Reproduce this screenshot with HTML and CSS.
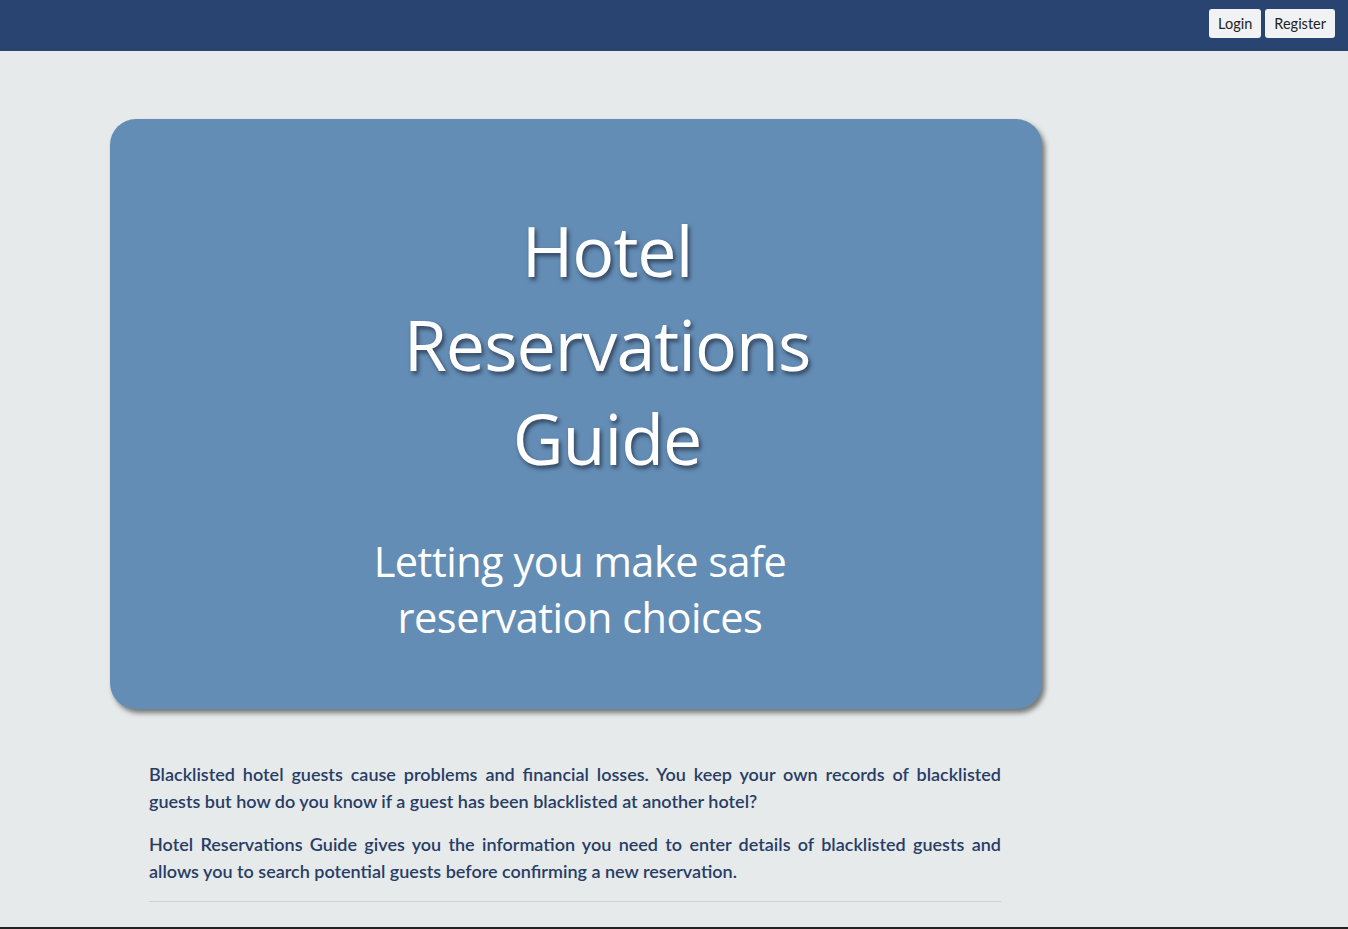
FILE: index.html
```html
<!DOCTYPE html>
<html lang="en">
<head>
<meta charset="utf-8">
<title>Hotel Reservations Guide</title>
<link rel="stylesheet" href="styles.css">
</head>
<body>
<header class="navbar">
  <div class="nav-actions">
    <a class="btn" href="#">Login</a>
    <a class="btn" href="#">Register</a>
  </div>
</header>
<main class="main">
  <section class="hero">
    <h1 class="hero-title">Hotel<br>Reservations<br>Guide</h1>
    <p class="hero-sub">Letting you make safe<br>reservation choices</p>
  </section>
  <section class="intro">
    <p>Blacklisted hotel guests cause problems and financial losses. You keep your own records of blacklisted guests but how do you know if a guest has been blacklisted at another hotel?</p>
    <p>Hotel Reservations Guide gives you the information you need to enter details of blacklisted guests and allows you to search potential guests before confirming a new reservation.</p>
    <hr class="rule">
  </section>
</main>
<footer class="footer"></footer>
</body>
</html>
```
FILE: styles.css
```css
html, body {
  margin: 0;
  padding: 0;
}
body {
  background: #e6eaea;
  font-family: Lato, "Open Sans", sans-serif;
  min-height: 929px;
  display: flex;
  flex-direction: column;
}
.navbar {
  background: #294471;
  height: 51px;
  display: flex;
  justify-content: flex-end;
  align-items: flex-start;
}
.nav-actions {
  display: flex;
  gap: 4px;
  padding: 9px 13px 0 0;
}
.btn {
  display: block;
  background: #f1f2f3;
  color: #222;
  text-decoration: none;
  font-family: Lato, sans-serif;
  font-size: 14.5px;
  line-height: 20px;
  padding: 5px 9px 4px;
  border-radius: 3px;
}
.main {
  flex: 1;
  padding: 68px 0 0 110px;
  width: 932px;
}
.hero {
  background: #648db5;
  border-radius: 26px;
  box-shadow: 3px 4px 5px rgba(60, 60, 60, 0.65);
  height: 590px;
  box-sizing: border-box;
  padding-top: 84px;
  color: #fff;
  text-align: center;
}
.hero-title {
  margin: 0 0 0 62px;
  font-family: "Open Sans", Lato, sans-serif;
  font-weight: 400;
  font-size: 70px;
  line-height: 94px;
  letter-spacing: -1px;
  text-shadow: 2px 3px 4px rgba(30, 40, 60, 0.75);
}
.hero-sub {
  margin: 48px 0 0 8px;
  font-family: "Open Sans", Lato, sans-serif;
  font-size: 41.5px;
  line-height: 56px;
  letter-spacing: -0.5px;
}
.intro {
  margin: 52px 0 0 39px;
  width: 852px;
  color: #283d66;
  font-size: 18px;
  line-height: 27px;
  font-weight: 600;
  text-align: justify;
}
.intro p {
  margin: 0 0 16px;
}
.rule {
  border: 0;
  border-top: 1px solid #cdd1d3;
  margin: 16px 0 0;
}
.footer {
  height: 2px;
  background: #222;
  margin-top: auto;
}
```
